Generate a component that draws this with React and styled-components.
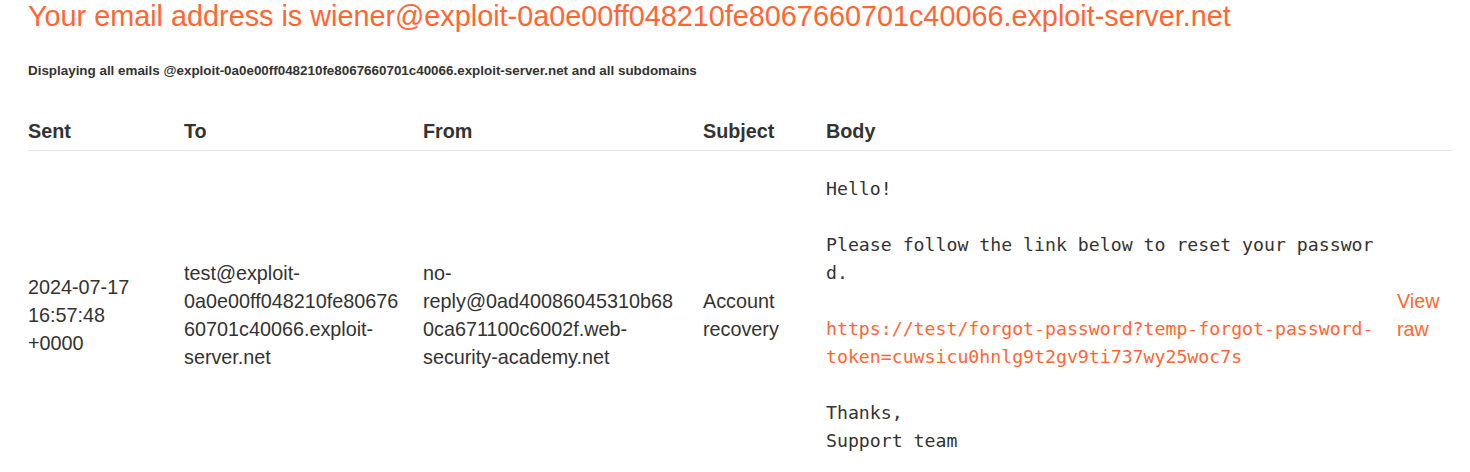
import styled, { createGlobalStyle } from 'styled-components';

const GlobalStyle = createGlobalStyle`
    body {
        margin: 0;
        background: #FFF;
        font-family: "Liberation Sans", Arial, sans-serif;
        color: #333332;
    }
`;

const StyledPage = styled.div`
    padding: 0 17px 0 28px;
`;

const StyledTitle = styled.h1`
    margin: 0;
    font-size: 28.8px;
    font-weight: 400;
    line-height: 33px;
    color: #FF6633;
    white-space: nowrap;
`;

const StyledSubtitle = styled.h4`
    margin: 30px 0 0;
    font-size: 13.4px;
    font-weight: 700;
    line-height: 16px;
`;

const StyledGrid = styled.div`
    display: grid;
    grid-template-columns: 156px 239px 280px 123px 571px 1fr;
    align-items: center;
    font-size: 19.8px;
    line-height: 28px;
`;

const StyledHeadRow = styled(StyledGrid)`
    margin-top: 38px;
    padding-bottom: 5px;
    border-bottom: 1px solid #E6E6E6;
    font-weight: 700;
`;

const StyledBodyRow = styled(StyledGrid)`
    padding-top: 24px;
`;

const StyledCell = styled.div`
    padding-right: ${props => props.$gap || 0}px;
    overflow-wrap: anywhere;
`;

const StyledMessage = styled.pre`
    margin: 0;
    width: 50ch;
    font-family: "DejaVu Sans Mono", "Liberation Mono", monospace;
    font-size: 18.2px;
    line-height: 28px;
    white-space: pre-wrap;
    word-break: break-all;
    color: #333332;
`;

const StyledLink = styled.a`
    color: #FF6633;
    text-decoration: none;
`;

const email = {
    sent: '2024-07-17 16:57:48 +0000',
    to: 'test@exploit-0a0e00ff048210fe8067660701c40066.exploit-server.net',
    from: 'no-reply@0ad40086045310b680ca671100c6002f.web-security-academy.net',
    subject: 'Account recovery',
    link: 'https://test/forgot-password?temp-forgot-password-token=cuwsicu0hnlg9t2gv9ti737wy25woc7s',
};

const App = () => {
    return (
        <StyledPage>
            <GlobalStyle />
            <StyledTitle>Your email address is wiener@exploit-0a0e00ff048210fe8067660701c40066.exploit-server.net</StyledTitle>
            <StyledSubtitle>Displaying all emails @exploit-0a0e00ff048210fe8067660701c40066.exploit-server.net and all subdomains</StyledSubtitle>
            <StyledHeadRow>
                <StyledCell>Sent</StyledCell>
                <StyledCell>To</StyledCell>
                <StyledCell>From</StyledCell>
                <StyledCell>Subject</StyledCell>
                <StyledCell>Body</StyledCell>
                <StyledCell></StyledCell>
            </StyledHeadRow>
            <StyledBodyRow>
                <StyledCell $gap={40}>{email.sent}</StyledCell>
                <StyledCell $gap={18}>{email.to}</StyledCell>
                <StyledCell $gap={20}>{email.from}</StyledCell>
                <StyledCell $gap={20}>{email.subject}</StyledCell>
                <StyledCell>
                    <StyledMessage>{'Hello!\n\nPlease follow the link below to reset your password.\n\n'}<StyledLink href="#">{email.link}</StyledLink>{'\n\nThanks,\nSupport team'}</StyledMessage>
                </StyledCell>
                <StyledCell><StyledLink href="#">View raw</StyledLink></StyledCell>
            </StyledBodyRow>
        </StyledPage>
    );
};

export default App;
